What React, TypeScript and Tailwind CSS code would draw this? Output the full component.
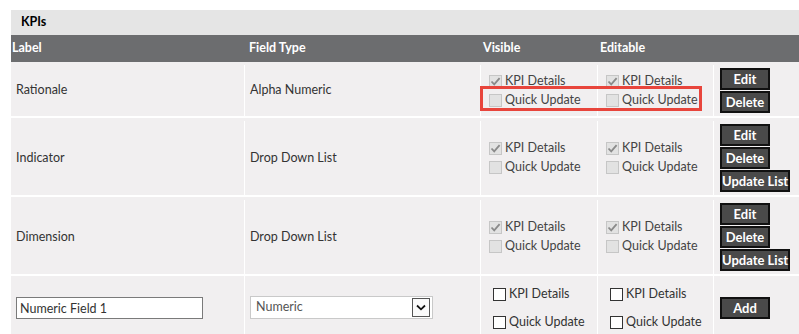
import React from "react"

type Row = {
  label: string
  fieldType: string
  height: string
  updateList?: boolean
}

const rows: Row[] = [
  { label: "Rationale", fieldType: "Alpha Numeric", height: "h-[56px]" },
  { label: "Indicator", fieldType: "Drop Down List", height: "h-[79px]", updateList: true },
  { label: "Dimension", fieldType: "Drop Down List", height: "h-[79px]", updateList: true },
]

const cols = "grid grid-cols-[234px_236px_117px_116px_85px]"

const Check = ({ checked, live }: { checked?: boolean; live?: boolean }) => {
  if (live) {
    return <span className="inline-block w-[13px] h-[13px] bg-white border border-[#333] shrink-0" />
  }
  return (
    <span className="inline-flex items-center justify-center w-[13px] h-[13px] bg-[#e2e2e2] border border-[#c6c6c6] shrink-0">
      {checked && (
        <svg width="11" height="11" viewBox="0 0 11 11">
          <path d="M1.5 5.5 L4.2 8.3 L9.6 2.2" fill="none" stroke="#8a8a8a" strokeWidth="1.8" />
        </svg>
      )}
    </span>
  )
}

const Btn = ({ children, w }: { children: React.ReactNode; w: string }) => (
  <button className={`${w} h-[22px] bg-[#4a4a4a] border-2 border-[#111] text-white font-bold text-[13px] leading-none whitespace-nowrap`}>
    {children}
  </button>
)

const CheckGroup = () => (
  <div className="flex flex-col gap-[4px] text-[#444]">
    <label className="flex items-center gap-[3px] h-[15px] whitespace-nowrap">
      <Check checked />
      <span>KPI Details</span>
    </label>
    <label className="flex items-center gap-[3px] h-[15px] whitespace-nowrap">
      <Check />
      <span>Quick Update</span>
    </label>
  </div>
)

const LiveGroup = () => (
  <div className="pl-[12px] pt-[11px] border-r border-white flex flex-col gap-[13px] text-[#333]">
    <label className="flex items-center gap-[3px] h-[15px] whitespace-nowrap">
      <Check live />
      <span>KPI Details</span>
    </label>
    <label className="flex items-center gap-[3px] h-[15px] whitespace-nowrap">
      <Check live />
      <span>Quick Update</span>
    </label>
  </div>
)

export default function App() {
  return (
    <div className="w-[799px] h-[334px] overflow-hidden bg-white" style={{ fontFamily: 'Lato, "Noto Sans", sans-serif' }}>
      <div className="relative ml-[11px] mt-[10px] w-[800px] text-[12.5px] text-[#333]">
        <div className="h-[25px] bg-[#e5e5e5] flex items-center pl-[10px] font-bold text-[12.5px] text-black">KPIs</div>
        <div className={`${cols} h-[27px] bg-[#6c6d6f] text-white font-bold text-[12.5px] items-center`}>
          <div className="pl-[1px]">Label</div>
          <div className="pl-[4px]">Field Type</div>
          <div className="pl-[2px]">Visible</div>
          <div className="pl-[2px]">Editable</div>
          <div />
        </div>

        {rows.map((r) => (
          <div key={r.label} className={`${cols} ${r.height} pt-[3px] bg-[#f1eff0] border-b-2 border-white`}>
            <div className="flex items-center pl-[5px] border-r border-white">{r.label}</div>
            <div className="flex items-center pl-[5px] border-r border-white">{r.fieldType}</div>
            <div className="flex items-center pl-[8px] border-r border-white">
              <CheckGroup />
            </div>
            <div className="flex items-center pl-[8px] border-r border-white">
              <CheckGroup />
            </div>
            <div className="flex flex-col justify-center items-start gap-[1px] pl-[6px]">
              <Btn w="w-[50px]">Edit</Btn>
              <Btn w="w-[50px]">Delete</Btn>
              {r.updateList && <Btn w="w-[70px]">Update List</Btn>}
            </div>
          </div>
        ))}

        <div className={`${cols} h-[62px] bg-[#f1eff0]`}>
          <div className="pl-[5px] pt-[21px] border-r border-white">
            <input
              className="w-[187px] h-[22px] bg-white border border-[#7a7a7a] px-[3px] text-[12.5px] text-[#333] outline-none"
              defaultValue="Numeric Field 1"
            />
          </div>
          <div className="pl-[5px] pt-[20px] border-r border-white">
            <div className="w-[183px] h-[23px] bg-white border border-[#c9c9c9] flex items-center justify-between pl-[5px] pr-[2px] text-[#555]">
              <span>Numeric</span>
              <span className="w-[18px] h-[19px] border border-[#555] bg-[#fafafa] flex items-center justify-center">
                <svg width="10" height="7" viewBox="0 0 10 7">
                  <path d="M1 1.5 L5 5.3 L9 1.5" fill="none" stroke="#111" strokeWidth="1.8" />
                </svg>
              </span>
            </div>
          </div>
          <LiveGroup />
          <LiveGroup />
          <div className="pl-[6px] pt-[21px]">
            <Btn w="w-[50px]">Add</Btn>
          </div>
        </div>

        <div className="absolute left-[469px] top-[76px] w-[222px] h-[25px] border-[3px] border-[#e8453c]" />
      </div>
    </div>
  )
}
